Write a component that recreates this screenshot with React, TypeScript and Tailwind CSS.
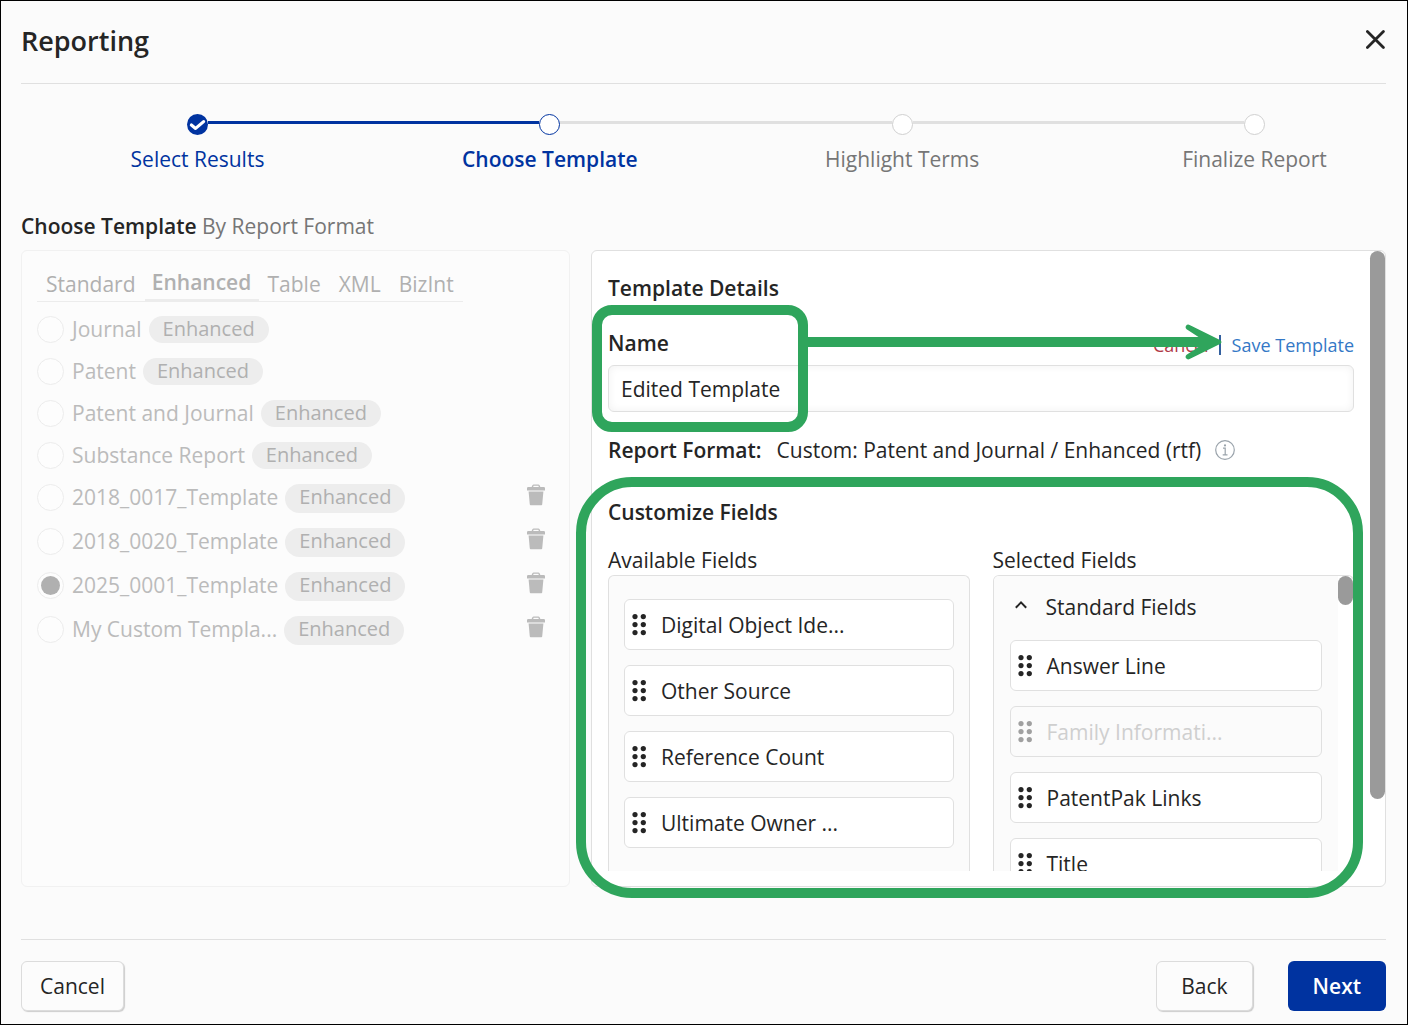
import { useState } from "react";

const steps = [
  { label: "Select Results", state: "done" },
  { label: "Choose Template", state: "current" },
  { label: "Highlight Terms", state: "todo" },
  { label: "Finalize Report", state: "todo" },
];

const tabs = ["Standard", "Enhanced", "Table", "XML", "BizInt"];

const templates = [
  { name: "Journal", custom: false },
  { name: "Patent", custom: false },
  { name: "Patent and Journal", custom: false },
  { name: "Substance Report", custom: false },
  { name: "2018_0017_Template", custom: true },
  { name: "2018_0020_Template", custom: true },
  { name: "2025_0001_Template", custom: true },
  { name: "My Custom Templa...", custom: true },
];

const availableFields = ["Digital Object Ide...", "Other Source", "Reference Count", "Ultimate Owner ..."];

const selectedFields = [
  { name: "Answer Line", locked: false },
  { name: "Family Informati...", locked: true },
  { name: "PatentPak Links", locked: false },
  { name: "Title", locked: false },
];

function TrashIcon() {
  return (
    <svg width="18" height="22" viewBox="0 0 18 22" fill="currentColor" aria-hidden="true">
      <path d="M0 4.2Q0 3 1.2 3H4.6L5.4 1.2Q5.8 0.4 6.8 0.4H11.2Q12.2 0.4 12.6 1.2L13.4 3H16.8Q18 3 18 4.2V6.4H0ZM6.2 3H11.8L11.4 1.8H6.6Z" />
      <path d="M1.6 7.6H16.4L15.2 20.4Q15.1 21.2 14.3 21.2H3.7Q2.9 21.2 2.8 20.4Z" />
    </svg>
  );
}

function GripIcon() {
  return (
    <svg className="shrink-0" width="14" height="22" viewBox="0 0 14 22" fill="currentColor" aria-hidden="true">
      {[2.6, 10.6, 18.6].map((y) => (
        <g key={y}>
          <circle cx="3" cy={y} r="2.6" />
          <circle cx="11.3" cy={y} r="2.6" />
        </g>
      ))}
    </svg>
  );
}

function InfoIcon() {
  return (
    <svg width="20" height="20" viewBox="0 0 20 20" fill="none" stroke="#9aa3ab" aria-hidden="true">
      <circle cx="10" cy="10" r="9.3" strokeWidth="1.2" />
      <path d="M8 8.2H10.2V14.6M7.7 14.8H12.5" strokeWidth="1.2" />
      <circle cx="10" cy="5.4" r="1.1" fill="#9aa3ab" stroke="none" />
    </svg>
  );
}

function FieldCard({ name, locked = false }: { name: string; locked?: boolean }) {
  return (
    <li
      className={
        locked
          ? "flex h-[51px] shrink-0 items-center gap-[15px] rounded-md border border-[#e0e0e0] bg-[#fbfbfb] pt-px pl-[7px] text-[#a0a0a0]"
          : "flex h-[51px] shrink-0 items-center gap-[15px] rounded-md border border-[#e0e0e0] bg-white pt-px pl-[7px] text-[#252525]"
      }
    >
      <GripIcon />
      <span className={locked ? "whitespace-nowrap text-[#cfcfcf]" : "whitespace-nowrap"}>{name}</span>
    </li>
  );
}

function Stepper() {
  return (
    <ol className="mt-[30px] mr-[121px] ml-[166px] flex">
      {steps.map((step, i) => (
        <li key={step.label} className={i < steps.length - 1 ? "flex-1" : ""}>
          <div className="flex h-[21px] items-start">
            {step.state === "done" && (
              <span className="flex size-[21px] shrink-0 items-center justify-center rounded-full bg-[#0033a0]">
                <svg width="17" height="12" viewBox="0 0 17 12" fill="none" stroke="#fff" strokeWidth="3.2" strokeLinecap="round" strokeLinejoin="round" aria-hidden="true">
                  <path d="M2.4 6L6.6 9.4L14.6 2.6" />
                </svg>
              </span>
            )}
            {step.state === "current" && <span className="size-[21px] shrink-0 rounded-full border border-[#0033a0] bg-white" />}
            {step.state === "todo" && <span className="size-[21px] shrink-0 rounded-full border border-[#d0d0d0] bg-white" />}
            {i < steps.length - 1 && (
              <span className={step.state === "done" ? "mt-[7px] h-[3px] flex-1 bg-[#0033a0]" : "mt-[7px] h-[3px] flex-1 bg-[#e0e0e0]"} />
            )}
          </div>
          <div className="mt-[10px] flex w-[21px] justify-center whitespace-nowrap">
            <span
              className={
                step.state === "done" ? "text-[#0033a0]" : step.state === "current" ? "font-semibold text-[#0033a0]" : "text-[#767676]"
              }
            >
              {step.label}
            </span>
          </div>
        </li>
      ))}
    </ol>
  );
}

function TemplateList() {
  const [selected, setSelected] = useState("2025_0001_Template");
  return (
    <section className="min-w-0 overflow-hidden rounded-md border border-[#f1f1f1] bg-[#fcfcfc] px-[15px] pt-[14px] text-[#bbbbbb]">
      <div className="inline-flex h-[37px] border-b border-[#ececec]" role="tablist">
        {tabs.map((tab) => (
          <button
            key={tab}
            type="button"
            role="tab"
            aria-selected={tab === "Enhanced"}
            className={
              tab === "Enhanced"
                ? "h-[36px] w-[114px] border-b-2 border-[#ececec] text-center font-semibold text-[#b0b0b0]"
                : "h-[36px] px-[9px] pt-[2px] text-[#b0b0b0]"
            }
          >
            {tab}
          </button>
        ))}
      </div>
      <ul className="mt-[14px] flex flex-col gap-[15px]">
        {templates.map((t) => (
          <li key={t.name} className={t.custom ? "flex h-[29px] items-start pr-[9px]" : "flex h-[27px] items-start pr-[9px]"}>
            <label className="flex h-[27px] items-center gap-2">
              <input
                type="radio"
                name="template"
                checked={selected === t.name}
                onChange={() => setSelected(t.name)}
                className="grid size-[27px] shrink-0 appearance-none place-content-center rounded-full border border-[#ececec] bg-[#fdfdfd] before:size-[19px] before:rounded-full checked:before:bg-[#b0b0b0]"
              />
              <span className="pb-[2px] whitespace-nowrap">{t.name}</span>
            </label>
            <span className="ml-[7px] h-full w-[120px] rounded-full bg-[#ededed] text-center text-[20px] leading-[26px] text-[#b0b0b0]">
              Enhanced
            </span>
            {t.custom && (
              <button type="button" aria-label={"Delete " + t.name} className="ml-auto">
                <TrashIcon />
              </button>
            )}
          </li>
        ))}
      </ul>
    </section>
  );
}

function TemplateDetails() {
  return (
    <section className="relative flex min-h-0 min-w-0 rounded-md border border-[#e0e0e0] bg-white">
      <div className="flex min-w-0 flex-1 flex-col overflow-hidden pt-[23px] pr-4 pb-[15px] pl-4">
        <h3 className="font-semibold">Template Details</h3>
        <div className="mt-[27px] flex justify-between">
          <label htmlFor="template-name" className="font-semibold">
            Name
          </label>
          <div className="flex items-center pt-[2px] text-[18px]">
            <a href="#cancel" className="text-[#b03a48]">
              Cancel
            </a>
            <span className="mr-[11px] ml-[10px] h-5 w-[2px] bg-[#33609f]" />
            <a href="#save" className="text-[#3478c6]">
              Save Template
            </a>
          </div>
        </div>
        <input
          id="template-name"
          type="text"
          defaultValue="Edited Template"
          className="mt-[6px] h-[47px] w-full shrink-0 rounded-md border border-[#e0e0e0] bg-white px-3 shadow-[inset_0_0_8px_rgba(0,0,0,0.06)]"
        />
        <div className="mt-6 flex items-center">
          <span className="font-semibold">Report Format:</span>
          <span className="ml-[15px]">Custom: Patent and Journal / Enhanced (rtf)</span>
          <button type="button" aria-label="About this format" className="ml-[14px]">
            <InfoIcon />
          </button>
        </div>
        <h3 className="mt-[34px] font-semibold">Customize Fields</h3>
        <div className="mt-5 grid min-h-0 flex-1 grid-cols-2 gap-[23px]">
          <div className="flex min-h-0 flex-col">
            <h4>Available Fields</h4>
            <ul className="mt-px flex min-h-0 flex-1 flex-col gap-[15px] overflow-hidden rounded-t-md border border-b-0 border-[#e0e0e0] bg-[#fbfbfb] px-[15px] pt-[23px]">
              {availableFields.map((f) => (
                <FieldCard key={f} name={f} />
              ))}
            </ul>
          </div>
          <div className="flex min-h-0 flex-col">
            <h4>Selected Fields</h4>
            <div className="mt-px flex min-h-0 flex-1 overflow-hidden rounded-t-md border border-b-0 border-[#e0e0e0] bg-white">
              <div className="flex-1 bg-[#fbfbfb] px-4 pt-[17px]">
                <button type="button" className="flex items-center">
                  <svg className="mx-[5px]" width="12" height="28" viewBox="0 0 12 28" fill="none" stroke="currentColor" strokeWidth="2" aria-hidden="true">
                    <path d="M0.8 14.8L6 9.4L11.2 14.8" />
                  </svg>
                  <span className="ml-[14px]">Standard Fields</span>
                </button>
                <ul className="mt-[19px] flex flex-col gap-[15px]">
                  {selectedFields.map((f) => (
                    <FieldCard key={f.name} name={f.name} locked={f.locked} />
                  ))}
                </ul>
              </div>
              <div className="h-[29px] w-[15px] rounded-full bg-[#9a9a9a]" />
            </div>
          </div>
        </div>
      </div>
      <div className="w-[15px] shrink-0">
        <div className="h-[548px] max-h-full rounded-full bg-[#9a9a9a]" />
      </div>

      <div className="pointer-events-none absolute top-[54px] left-0 h-[127px] w-[216px] rounded-[20px] border-[10px] border-[#2fa55c]" />
      <div className="pointer-events-none absolute top-[73px] right-[163px] left-[215px] flex h-[36px]">
        <div className="mt-[13px] h-[10px] flex-1 bg-[#2fa55c]" />
        <svg className="shrink-0" width="37" height="36" viewBox="0 0 37 36" aria-hidden="true">
          <path
            d="M0 13H13.5L1.6 5.3Q0 4 0.9 2Q2.3 0 4.6 0.9L35.5 16.2Q37.4 18 35.5 19.8L4.6 35.1Q2.3 36 0.9 34Q0 32 1.6 30.7L13.5 23H0Z"
            fill="#2fa55c"
          />
        </svg>
      </div>
      <div className="pointer-events-none absolute top-[226px] right-[22px] -bottom-[12px] -left-4 rounded-[56px] border-[10px] border-[#2fa55c]" />
    </section>
  );
}

export default function App() {
  return (
    <div className="flex h-screen flex-col overflow-hidden border border-black bg-[#fbfbfb] pr-[21px] pb-[13px] pl-5 font-['Open_Sans',sans-serif] text-[21px] leading-[28px] text-[#252525]">
      <header className="flex h-[83px] shrink-0 items-center justify-between border-b border-[#e0e0e0] pb-[2px]">
        <h1 className="text-[27px] font-semibold">Reporting</h1>
        <button type="button" aria-label="Close" className="pb-[3px]">
          <svg width="20" height="20" viewBox="0 0 20 20" fill="none" stroke="currentColor" strokeWidth="2.8" strokeLinecap="round" aria-hidden="true">
            <path d="M1.4 1.6L17.4 17.6M17.4 1.6L1.4 17.6" />
          </svg>
        </button>
      </header>
      <Stepper />
      <h2 className="mt-[39px]">
        <span className="font-semibold">Choose Template</span> <span className="text-[#767676]">By Report Format</span>
      </h2>
      <main className="mt-[10px] grid min-h-0 flex-1 grid-cols-[549fr_795fr] grid-rows-[minmax(0,1fr)] gap-[21px]">
        <TemplateList />
        <TemplateDetails />
      </main>
      <footer className="mt-[52px] flex shrink-0 justify-between border-t border-[#e0e0e0] pt-[21px]">
        <button type="button" className="h-[50px] rounded-md border border-[#dcdcdc] bg-[#fcfcfc] px-[18px] shadow-[1px_1px_1px_#cccccc]">
          Cancel
        </button>
        <div className="flex gap-[35px]">
          <button type="button" className="h-[50px] rounded-md border border-[#dcdcdc] bg-[#fcfcfc] px-6 shadow-[1px_1px_1px_#cccccc]">
            Back
          </button>
          <button type="button" className="h-[50px] rounded-md bg-[#0033a0] px-[25px] font-semibold text-white">
            Next
          </button>
        </div>
      </footer>
    </div>
  );
}
